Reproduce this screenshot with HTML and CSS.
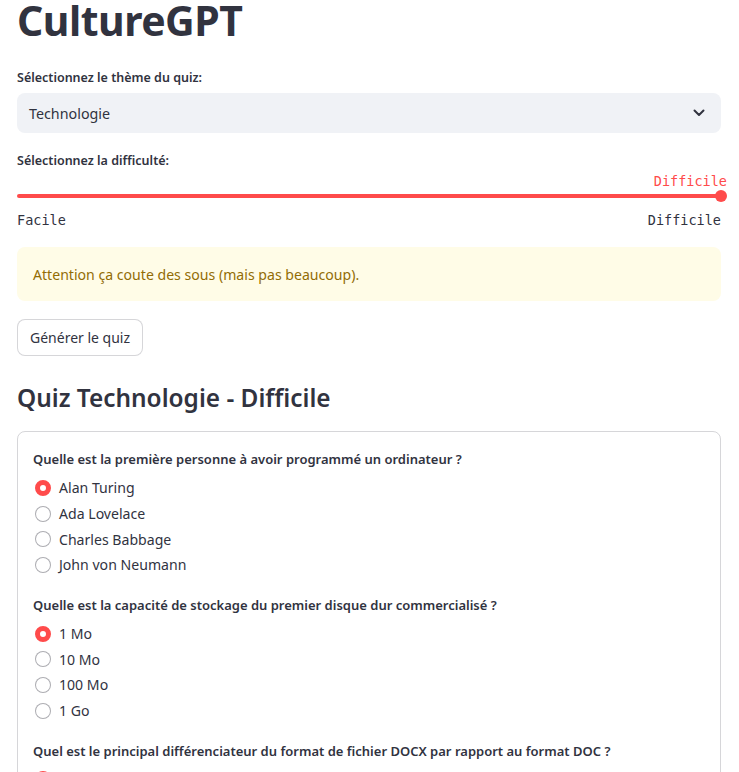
FILE: index.html
```html
<!DOCTYPE html>
<html lang="fr">
<head>
<meta charset="utf-8">
<title>CultureGPT</title>
<link rel="stylesheet" href="styles.css">
</head>
<body>
<main class="main">
  <h1 class="title">CultureGPT</h1>

  <div class="field">
    <label class="label">Sélectionnez le thème du quiz:</label>
    <div class="select">
      <span>Technologie</span>
      <svg class="chev" width="12" height="8" viewBox="0 0 12 8"><path d="M1.5 1.5 L6 6 L10.5 1.5" fill="none" stroke="#31333f" stroke-width="2" stroke-linecap="round" stroke-linejoin="round"/></svg>
    </div>
  </div>

  <div class="field slider-field">
    <label class="label">Sélectionnez la difficulté:</label>
    <div class="slider">
      <div class="slider-value">Difficile</div>
      <div class="track"><div class="thumb"></div></div>
      <div class="ticks"><span>Facile</span><span>Difficile</span></div>
    </div>
  </div>

  <div class="warning">Attention ça coute des sous (mais pas beaucoup).</div>

  <button class="btn">Générer le quiz</button>

  <h3 class="subtitle">Quiz Technologie - Difficile</h3>

  <div class="form">
    <div class="question">
      <p class="qlabel">Quelle est la première personne à avoir programmé un ordinateur ?</p>
      <div class="options">
        <div class="opt"><span class="radio on"></span>Alan Turing</div>
        <div class="opt"><span class="radio"></span>Ada Lovelace</div>
        <div class="opt"><span class="radio"></span>Charles Babbage</div>
        <div class="opt"><span class="radio"></span>John von Neumann</div>
      </div>
    </div>
    <div class="question">
      <p class="qlabel">Quelle est la capacité de stockage du premier disque dur commercialisé ?</p>
      <div class="options">
        <div class="opt"><span class="radio on"></span>1 Mo</div>
        <div class="opt"><span class="radio"></span>10 Mo</div>
        <div class="opt"><span class="radio"></span>100 Mo</div>
        <div class="opt"><span class="radio"></span>1 Go</div>
      </div>
    </div>
    <div class="question">
      <p class="qlabel">Quel est le principal différenciateur du format de fichier DOCX par rapport au format DOC ?</p>
      <div class="options">
        <div class="opt"><span class="radio on"></span>Compression</div>
        <div class="opt"><span class="radio"></span>Sécurité</div>
      </div>
    </div>
  </div>
</main>
</body>
</html>
```

FILE: styles.css
```css
* { box-sizing: border-box; }
html, body { margin: 0; padding: 0; background: #fff; overflow: hidden; }
body {
  font-family: "Noto Sans", "Open Sans", sans-serif;
  color: #31333f;
  font-size: 14.2px;
}
.main {
  width: 739px;
  padding: 0 18px 0 17px;
  display: flex;
  flex-direction: column;
}
.title {
  margin: -6px 0 0 0;
  font-size: 41px;
  font-weight: 700;
  line-height: 52px;
  letter-spacing: -0.5px;
}
.field { display: flex; flex-direction: column; margin-top: 22px; }
.label {
  font-size: 12.5px;
  font-weight: 600;
  line-height: 20px;
  margin-bottom: 5px;
}
.select {
  height: 40px;
  background: #f0f2f6;
  border-radius: 8px;
  display: flex;
  align-items: center;
  justify-content: space-between;
  padding: 0 16px 0 12px;
  font-size: 14.3px;
}
.chev { display: block; }
.slider-field { margin-top: 18px; }
.slider-field .label { margin-bottom: 0; }
.slider { display: flex; flex-direction: column; }
.slider-value {
  align-self: flex-end;
  margin-right: -6px;
  margin-top: 1px;
  font-family: "DejaVu Sans Mono", "Liberation Mono", monospace;
  font-size: 13.5px;
  color: #ff4b4b;
  line-height: 18px;
}
.track {
  position: relative;
  height: 4px;
  background: #ff4b4b;
  border-radius: 2px;
  margin-top: 4px;
}
.thumb {
  position: absolute;
  right: -6px;
  top: -4px;
  width: 12px;
  height: 12px;
  border-radius: 50%;
  background: #ff4b4b;
}
.ticks {
  display: flex;
  justify-content: space-between;
  font-family: "DejaVu Sans Mono", "Liberation Mono", monospace;
  font-size: 13.5px;
  line-height: 18px;
  margin-top: 13px;
}
.warning {
  margin-top: 18px;
  height: 54px;
  background: #fffce7;
  color: #926c05;
  border-radius: 8px;
  display: flex;
  align-items: center;
  padding: 0 16px;
  font-size: 14.1px;
}
.btn {
  align-self: flex-start;
  margin-top: 18px;
  height: 37px;
  padding: 0 12px;
  border: 1px solid rgba(49, 51, 63, 0.2);
  border-radius: 8px;
  background: #fff;
  font-family: inherit;
  font-size: 14px;
  color: #31333f;
}
.subtitle {
  margin: 24px 0 0 0;
  font-size: 24.4px;
  font-weight: 600;
  line-height: 36px;
}
.form {
  margin-top: 15px;
  border: 1px solid rgba(49, 51, 63, 0.2);
  border-radius: 8px;
  padding: 17px 15px 20px;
  display: flex;
  flex-direction: column;
  gap: 17px;
}
.qlabel {
  margin: 0 0 6px 0;
  font-size: 13px;
  font-weight: 600;
  line-height: 20px;
}
.options { display: flex; flex-direction: column; }
.opt {
  display: flex;
  align-items: center;
  height: 25.7px;
  font-size: 14.1px;
}
.radio {
  width: 16px;
  height: 16px;
  border-radius: 50%;
  border: 1px solid rgba(49, 51, 63, 0.4);
  margin: 0 8px 0 2px;
  flex: none;
  background: #fff;
}
.radio.on {
  border: 5px solid #ff4b4b;
  background: #fff;
}
```
